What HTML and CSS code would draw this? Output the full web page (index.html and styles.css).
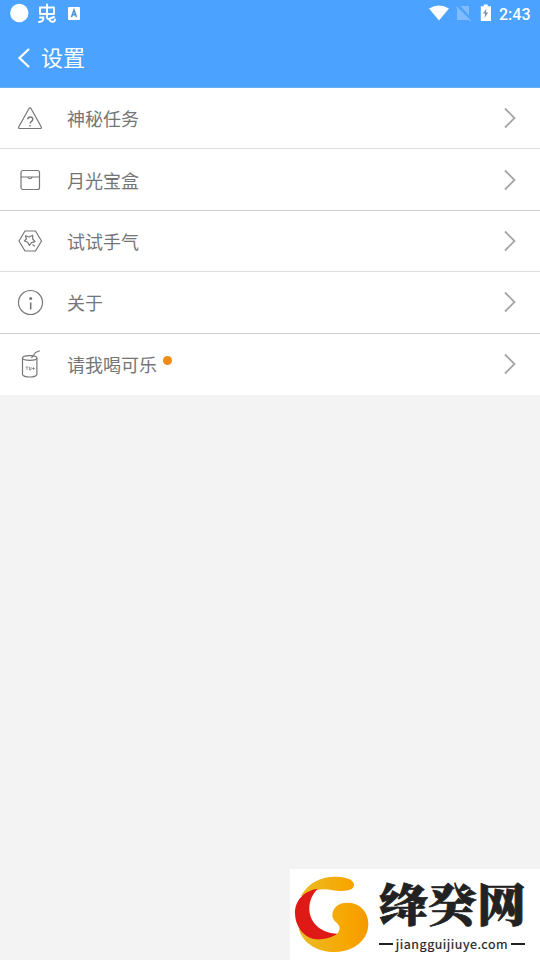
FILE: index.html
```html
<!DOCTYPE html>
<html lang="zh-CN">
<head>
<meta charset="utf-8">
<title>设置</title>
<link rel="stylesheet" href="styles.css">
</head>
<body>
<header class="top">
  <div class="status">
    <svg class="status-left" width="90" height="28" viewBox="0 0 90 28">
      <circle cx="19.300" cy="13" r="9.200" fill="#fff"/>
      <g fill="none" stroke="#fff" stroke-width="1.900" stroke-linecap="round" stroke-linejoin="round">
        <path d="M40 7.500h14v6.500H40zM47 4.500v11M39 22c3 0 4.500-1.500 4.500-4.500H40M47 14v3c0 2 1 2.500 3 1.500l4-1.500M49.500 20c1.500 2.500 5.500 2.500 5.500-.5"/>
      </g>
      <rect x="68" y="7" width="12" height="13" rx="1" fill="#fff"/>
      <path d="M71.500 17l2.500-7 2.500 7M72.500 14.700h3" fill="none" stroke="#4b8fd6" stroke-width="1.500"/>
    </svg>
    <div class="status-right">
      <svg width="74" height="28" viewBox="0 0 74 28">
        <path d="M4 8.500Q14 2.500 24 8.500L14 20.500z" fill="#fff"/>
        <path d="M32 8l12 12H32zM35.500 6H44v9.500z" fill="#80bcff"/>
        <path d="M31.500 7l14 14" stroke="#80bcff" stroke-width="1.300"/>
        <path d="M55.800 6.200h3V4.500h4v1.700H66V21H55.800z" fill="#fff"/>
        <path d="M61.500 8.500l-3.500 5h2.200L59.500 18l3.700-5.500h-2.300z" fill="#6a91bd"/>
      </svg>
      <span class="clock">2:43</span>
    </div>
  </div>
  <div class="bar">
    <svg width="14" height="22" viewBox="0 0 14 22"><path d="M12 2L2.500 11l9.500 9" fill="none" stroke="#fff" stroke-width="2.300"/></svg>
    <h1 class="title">设置</h1>
  </div>
</header>
<main class="list">
  <div class="row soft">
    <svg class="icon" viewBox="0 0 28 30"><path d="M13 5.500q1-1.200 2 0L25.300 24q.4 1.500-1 1.500H3.700q-1.400 0-1-1.500z"/><path d="M11.700 16.300c.3-3 5.300-3 5.100 0 0 2.200-2.500 1.900-2.700 4.200M14 22v1.500" stroke-width="1.400"/></svg>
    <span class="label">神秘任务</span>
    <svg class="arrow" viewBox="0 0 14 22"><path d="M2 1.500l9.500 9.500L2 20.500"/></svg>
  </div>
  <div class="row">
    <svg class="icon" viewBox="0 0 28 30"><rect x="5" y="5.500" width="18.500" height="19" rx="2"/><path d="M5 12h6.500q2.500 3.500 5 0h7M11.500 12h5"/></svg>
    <span class="label">月光宝盒</span>
    <svg class="arrow" viewBox="0 0 14 22"><path d="M2 1.500l9.500 9.500L2 20.500"/></svg>
  </div>
  <div class="row soft">
    <svg class="icon" viewBox="0 0 28 30"><path d="M9 5h10.500l6 10-6 10H9L3 15z"/><path d="M9.500 9.800l3.500 1.200 3.700-1.700v3.700l2.300 2.700-3.500 1-2.200 2.600-1.600-3-3.200-1.300 1.800-2zM16.500 18.500l2.300 1.700"/></svg>
    <span class="label">试试手气</span>
    <svg class="arrow" viewBox="0 0 14 22"><path d="M2 1.500l9.500 9.500L2 20.500"/></svg>
  </div>
  <div class="row">
    <svg class="icon" viewBox="0 0 28 30"><circle cx="14.500" cy="15.500" r="12"/><path d="M14.700 15.500v7" stroke-width="1.600"/><circle class="dot-fill" cx="14.700" cy="11.500" r="1.500"/></svg>
    <span class="label">关于</span>
    <svg class="arrow" viewBox="0 0 14 22"><path d="M2 1.500l9.500 9.500L2 20.500"/></svg>
  </div>
  <div class="row">
    <svg class="icon" viewBox="0 0 28 30"><ellipse cx="13.700" cy="9" rx="7.200" ry="2.300"/><path d="M6.500 9V25.500q1 2.500 7.200 2.500t7.200-2.500V9M15.500 9L19.500 3.500l4.300-1.800"/><path d="M9.500 18h3M11 18v3M13.500 18v3h1.500v-3M16 19.500h3M17.500 18v3" stroke-width=".7"/></svg>
    <span class="label">请我喝可乐</span><i class="badge"></i>
    <svg class="arrow" viewBox="0 0 14 22"><path d="M2 1.500l9.500 9.500L2 20.500"/></svg>
  </div>
</main>
<aside class="brand">
  <svg width="84" height="91" viewBox="18 21 252 273">
    <defs><linearGradient id="gold" x1="0" x2="1"><stop offset="0" stop-color="#e9bc27"/><stop offset=".7" stop-color="#f8a600"/><stop offset="1" stop-color="#f49a00"/></linearGradient></defs>
    <path fill="url(#gold)" d="M50 103C75 58 115 43 158 44C195 45 211 57 210 70C208 86 185 88 158 86C134 82 115 79 98 84zM44 200C58 247 104 271 155 270C212 268 253 232 253 185C252 146 226 122 190 122C160 122 144 141 145 161C146 180 167 182 167 199C166 208 162 214 157 217z"/>
    <path fill="#df1a16" d="M102 80C59 86 32 116 33 155C35 207 76 239 116 231C135 228 150 222 160 215C113 214 78 184 76 143C75 117 85 96 102 80z"/>
  </svg>
  <div class="brand-text">
    <div class="brand-name">绛癸网</div>
    <div class="brand-url"><span>jiangguijiuye.com</span></div>
  </div>
</aside>
</body>
</html>
```
FILE: styles.css
```css
* { box-sizing: border-box; }
body {
  margin: 0;
  height: 960px;
  display: flex;
  flex-direction: column;
  overflow: hidden;
  background: #f3f3f3;
  font-family: "Noto Sans CJK SC", sans-serif;
}
svg { display: block; flex: none; }
.top { height: 88px; background: #4ba3ff; border-bottom: 1px solid #6aaeee; }
.status { height: 28px; display: flex; justify-content: space-between; }
.status-right { display: flex; align-items: center; padding-right: 9px; }
.clock {
  width: 36px;
  margin-right: -4px;
  padding-top: 1px;
  font: 500 16px/28px Roboto, sans-serif;
  color: #fff;
  white-space: nowrap;
}
.bar { height: 59px; display: flex; align-items: center; padding-left: 17px; gap: 10px; }
.title { margin: 0; padding-bottom: 3px; font-size: 22px; font-weight: 400; line-height: 32px; color: #fff; }
.list { height: 307px; display: grid; grid-template-rows: repeat(5, 1fr); background: #fff; }
.row {
  display: flex;
  align-items: center;
  padding: 0 23px 0 16px;
  border-bottom: 1px solid #d2d2d2;
}
.soft { border-bottom-color: #dedede; }
.row:last-child { border-bottom: 0; }
.icon { width: 28px; height: 30px; fill: none; stroke: #777; stroke-width: 1.2; stroke-linejoin: round; }
.dot-fill { fill: #777; stroke: none; }
.label { margin-left: 23px; font-size: 18px; line-height: 28px; color: #757575; }
.badge { width: 9px; height: 9px; margin: 0 0 8px 6px; border-radius: 50%; background: #f18b18; }
.arrow { width: 14px; height: 22px; margin-left: auto; fill: none; stroke: #a5a5a5; stroke-width: 1.8; }
.brand {
  width: 250px;
  height: 91px;
  margin: auto 0 0 auto;
  display: flex;
  background: #fff;
}
.brand-text { width: 150px; margin-left: 5px; padding-top: 7px; }
.brand-name {
  height: 59px;
  font: 900 49px/54px "Noto Serif CJK SC", "Noto Sans CJK SC", serif;
  color: #222;
  -webkit-text-stroke: .8px #222;
  transform: scaleY(.93);
  transform-origin: 0 22px;
  white-space: nowrap;
}
.brand-url {
  display: flex;
  align-items: center;
  gap: 3px;
  width: 146px;
  font: 400 12.5px/18px "Noto Sans CJK SC", sans-serif;
  letter-spacing: .55px;
  color: #222;
  -webkit-text-stroke: .2px #222;
}
.brand-url::before, .brand-url::after { content: ""; flex: 1; height: 2px; background: #222; }
```
